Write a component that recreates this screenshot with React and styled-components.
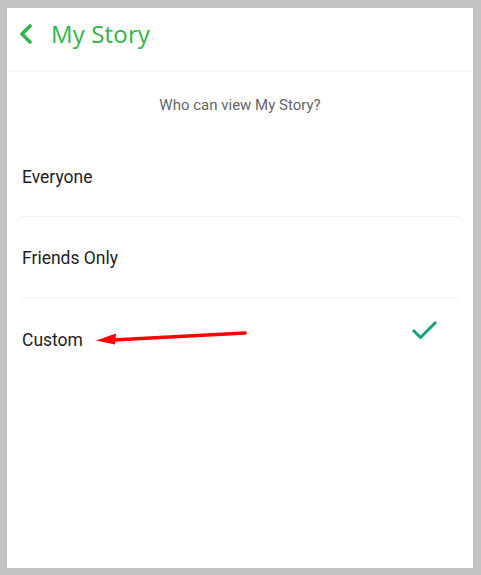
import React from 'react';
import styled, { createGlobalStyle } from 'styled-components';

const GlobalStyle = createGlobalStyle`
  html, body {
    margin: 0;
    padding: 0;
    background: #c3c3c3;
  }
  body {
    font-family: Roboto, "Liberation Sans", sans-serif;
  }
`;

const Frame = styled.div`
  width: 481px;
  height: 575px;
  padding: 8px 8px 7px 7px;
  box-sizing: border-box;
`;

const Screen = styled.div`
  background: #fff;
  height: 100%;
  display: flex;
  flex-direction: column;
`;

const Header = styled.div`
  height: 64px;
  display: flex;
  align-items: center;
  gap: 18px;
  padding: 0 0 12px 12px;
  border-bottom: 1px solid #f1f1f1;
  box-sizing: border-box;
`;

const Title = styled.h1`
  margin: 0;
  font-family: "Open Sans", sans-serif;
  font-weight: 400;
  font-size: 24px;
  color: #2fb548;
  letter-spacing: 0.15px;
`;

const Subtitle = styled.div`
  height: 64px;
  display: flex;
  align-items: center;
  justify-content: center;
  padding-top: 2px;
  box-sizing: border-box;
  font-size: 15px;
  color: #666;
`;

const List = styled.div`
  padding: 0 14px;
`;

const Row = styled.div`
  position: relative;
  height: 81px;
  display: flex;
  align-items: center;
  justify-content: space-between;
  padding: 2px 21px 0 1px;
  box-sizing: border-box;
  border-bottom: ${(p) => (p.last ? 'none' : '1px solid #f2f2f2')};
  font-size: 17.5px;
  color: #1e1e1e;
`;

const Check = styled.svg`
  width: 27px;
  height: 20px;
  margin-top: -19px;
`;

const Pointer = styled.svg`
  position: absolute;
  left: 74px;
  top: 32px;
  width: 154px;
  height: 16px;
`;

const options = ['Everyone', 'Friends Only', 'Custom'];

export default function App() {
  const selected = 'Custom';
  return (
    <Frame>
      <GlobalStyle />
      <Screen>
        <Header>
          <svg width="14" height="20" viewBox="0 0 14 20">
            <path d="M11 2 L3 10 L11 18" fill="none" stroke="#2fb548" strokeWidth="3.6" strokeLinecap="round" strokeLinejoin="round" />
          </svg>
          <Title>My Story</Title>
        </Header>
        <Subtitle>Who can view My Story?</Subtitle>
        <List>
          {options.map((o, i) => (
            <Row key={o} last={i === options.length - 1}>
              <span>{o}</span>
              {o === selected && (
                <>
                  <Check viewBox="0 0 27 20">
                    <path d="M2 10 L9.5 17.5 L25 2" fill="none" stroke="#16a07c" strokeWidth="3" strokeLinejoin="round" />
                  </Check>
                  <Pointer viewBox="0 0 154 16">
                    <path d="M150 3 L18 10" stroke="#f00" strokeWidth="3.5" strokeLinecap="round" />
                    <path d="M1 10.5 L21 3.5 L20 14.5 Z" fill="#f00" />
                  </Pointer>
                </>
              )}
            </Row>
          ))}
        </List>
      </Screen>
    </Frame>
  );
}
